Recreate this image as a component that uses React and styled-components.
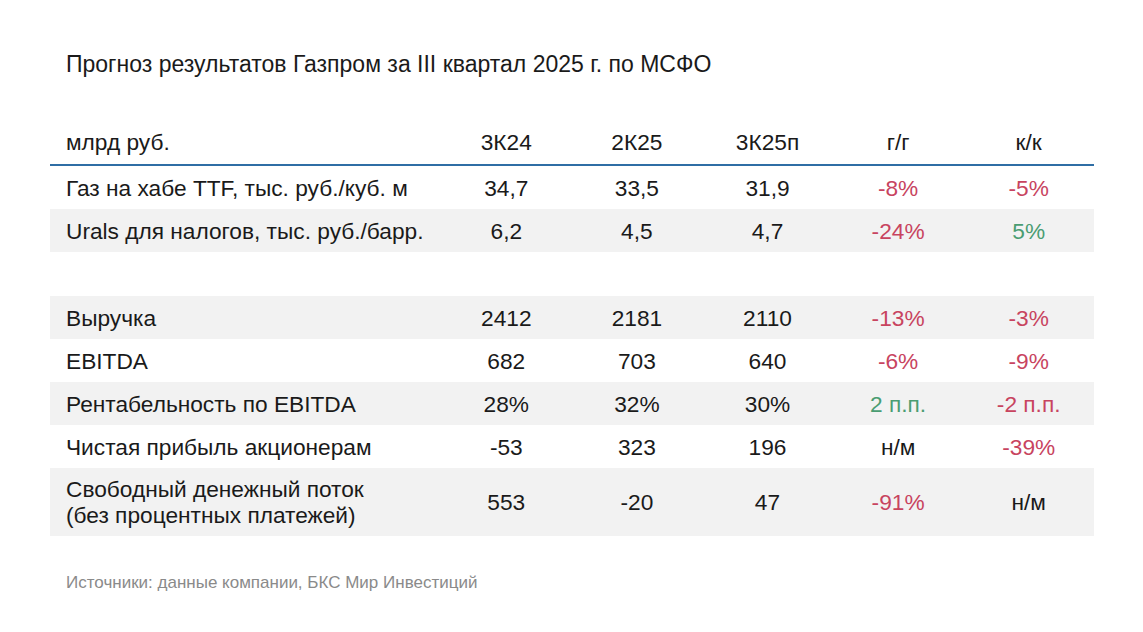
import React from 'react';
import styled, { createGlobalStyle } from 'styled-components';

const GlobalStyle = createGlobalStyle`
  html, body {
    margin: 0;
    padding: 0;
    background: #ffffff;
  }
  body {
    font-family: "Liberation Sans", Arial, sans-serif;
    color: #1a1a1a;
  }
`;

const Page = styled.div`
  width: 1143px;
  height: 632px;
  box-sizing: border-box;
  padding: 51px 49px 0 50px;
`;

const Title = styled.h1`
  margin: 0 0 43px 16px;
  font-size: 23px;
  font-weight: normal;
  line-height: 26px;
`;

const Table = styled.div`
  display: flex;
  flex-direction: column;
  width: 1044px;
`;

const Row = styled.div`
  display: grid;
  grid-template-columns: 391px repeat(5, 1fr);
  align-items: center;
  height: ${(p) => p.$height || 43}px;
  background: ${(p) => (p.$shaded ? '#f2f2f2' : 'transparent')};
  font-size: 22.7px;
  line-height: 26px;
`;

const HeaderRow = styled(Row)`
  height: 44px;
  border-bottom: 2px solid #2f6ea5;
`;

const Label = styled.div`
  padding-left: 16px;
`;

const Cell = styled.div`
  text-align: center;
  color: ${(p) =>
    p.$tone === 'neg' ? '#c8445f' : p.$tone === 'pos' ? '#4a9d72' : '#1a1a1a'};
`;

const Spacer = styled.div`
  height: 44px;
`;

const Source = styled.p`
  margin: 37px 0 0 16px;
  font-size: 17px;
  line-height: 20px;
  color: #8a8a8a;
`;

const tone = (v) => {
  if (v === 'н/м') return null;
  return v.startsWith('-') ? 'neg' : 'pos';
};

const topRows = [
  { label: 'Газ на хабе TTF, тыс. руб./куб. м', vals: ['34,7', '33,5', '31,9', '-8%', '-5%'] },
  { label: 'Urals для налогов, тыс. руб./барр.', vals: ['6,2', '4,5', '4,7', '-24%', '5%'], shaded: true },
];

const mainRows = [
  { label: 'Выручка', vals: ['2412', '2181', '2110', '-13%', '-3%'], shaded: true },
  { label: 'EBITDA', vals: ['682', '703', '640', '-6%', '-9%'] },
  { label: 'Рентабельность по EBITDA', vals: ['28%', '32%', '30%', '2 п.п.', '-2 п.п.'], shaded: true },
  { label: 'Чистая прибыль акционерам', vals: ['-53', '323', '196', 'н/м', '-39%'] },
  {
    label: ['Свободный денежный поток', '(без процентных платежей)'],
    vals: ['553', '-20', '47', '-91%', 'н/м'],
    shaded: true,
    height: 68,
  },
];

function DataRow({ row }) {
  return (
    <Row $shaded={row.shaded} $height={row.height}>
      <Label>
        {Array.isArray(row.label)
          ? row.label.map((l) => <div key={l}>{l}</div>)
          : row.label}
      </Label>
      {row.vals.map((v, i) => (
        <Cell key={i} $tone={i >= 3 ? tone(v) : null}>
          {v}
        </Cell>
      ))}
    </Row>
  );
}

export default function App() {
  return (
    <>
      <GlobalStyle />
      <Page>
        <Title>Прогноз результатов Газпром за III квартал 2025 г. по МСФО</Title>
        <Table>
          <HeaderRow>
            <Label>млрд руб.</Label>
            <Cell>3К24</Cell>
            <Cell>2К25</Cell>
            <Cell>3К25п</Cell>
            <Cell>г/г</Cell>
            <Cell>к/к</Cell>
          </HeaderRow>
          {topRows.map((r) => (
            <DataRow key={r.label} row={r} />
          ))}
          <Spacer />
          {mainRows.map((r) => (
            <DataRow key={String(r.label)} row={r} />
          ))}
        </Table>
        <Source>Источники: данные компании, БКС Мир Инвестиций</Source>
      </Page>
    </>
  );
}
